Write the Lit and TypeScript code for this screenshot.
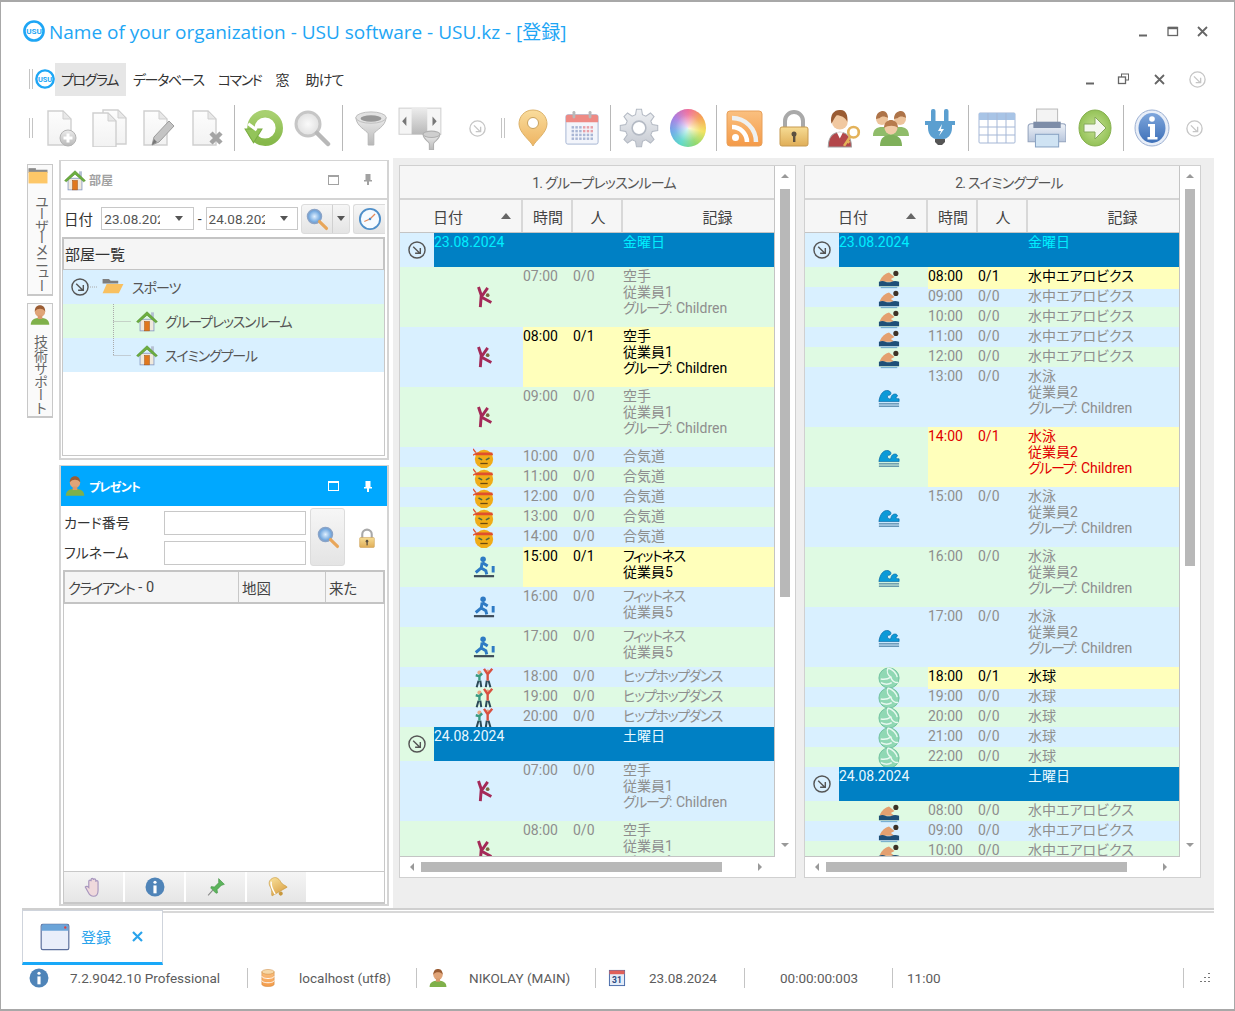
import { LitElement, html, css, svg } from "lit";

const doc = (dx = 0, dy = 0) => svg`<g transform="translate(${dx} ${dy})"><path d="M7 2h15l8 8v26H7z" fill="url(#gDoc)" stroke="#cfcfcf" stroke-width="1.4"/><path d="M22 2v8h8z" fill="#e8e8e8" stroke="#cfcfcf"/></g>`;

const gearPts = (() => {
  const pts: string[] = [];
  const n = 8;
  for (let i = 0; i < n; i++) {
    const a = (i / n) * Math.PI * 2;
    const step = (Math.PI * 2) / n;
    const p = (r: number, t: number) => `${(19 + r * Math.cos(t)).toFixed(1)},${(19 + r * Math.sin(t)).toFixed(1)}`;
    pts.push(p(13, a - step * 0.33), p(18, a - step * 0.17), p(18, a + step * 0.17), p(13, a + step * 0.33));
  }
  return pts.join(" ");
})();

const calDots = (() => {
  const out: unknown[] = [];
  for (let r = 0; r < 4; r++)
    for (let c = 0; c < 6; c++)
      out.push(svg`<rect x=${8 + c * 4} y=${17 + r * 4} width="2.6" height="2.6" fill=${c > 2 && r < 2 ? "#e8a0a8" : "#a9b6d4"}/>`);
  return out;
})();

const I: Record<string, unknown> = {
  docPlus: svg`${doc(0, 0)}<circle cx="27" cy="29" r="8" fill="url(#gMetal)" stroke="#b4b4b4"/><path d="M27 24.500v9M22.500 29h9" stroke="#fff" stroke-width="3"/>`,
  docs: svg`${doc(7, -1)}${doc(-3, 2)}`,
  docPen: svg`${doc(-1, 0)}<path d="M31 12l5 5-15 16-7 3 2-8z" fill="#c4c4c4" stroke="#9c9c9c"/><path d="M14 36l2-6 3 3z" fill="#777"/>`,
  docX: svg`${doc(-1, 0)}<path d="M24 24l10 10M34 24L24 34" stroke="#a4a4a4" stroke-width="4.500"/>`,
  refresh: svg`<circle cx="21" cy="19" r="13.500" fill="none" stroke="url(#gRefresh)" stroke-width="7"/><path d="M2 20h16l-8 13z" fill="#93c45a" stroke="#7aad42"/><path d="M5 15l8 6" stroke="#fff" stroke-width="3"/>`,
  mag: svg`<circle cx="15" cy="15" r="12" fill="url(#gGlass)" stroke="#c6c6c6" stroke-width="3"/><path d="M24 24l11 11" stroke="#b8b8b8" stroke-width="4.500" stroke-linecap="round"/>`,
  funnel: svg`<path d="M3 8c1 10 11 13 13 17v12h6V25c2-4 12-7 13-17z" fill="url(#gMetal)" stroke="#b5b5b5"/><ellipse cx="19" cy="8" rx="16" ry="6" fill="#e2e2e2" stroke="#bcbcbc"/><ellipse cx="19" cy="9" rx="11" ry="3.500" fill="#989898"/>`,
  colFunnel: svg`<rect x="1" y="2" width="40" height="25" fill="#f5f5f5" stroke="#d0d0d0"/><rect x="13" y="2" width="15" height="25" fill="url(#gMetal)"/><path d="M8 10v9l-4-4.500zM33 10v9l4-4.500z" fill="#777"/><path d="M24 27c0 5 5 6 6 9v6h4v-6c1-3 6-4 6-9z" fill="url(#gMetal)" stroke="#b0b0b0"/><ellipse cx="32" cy="27" rx="8" ry="3" fill="#cfcfcf" stroke="#b0b0b0"/>`,
  pin: svg`<path d="M19 1C10 1 5 8 5 15c0 9 12 17 14 22 2-5 14-13 14-22 0-7-5-14-14-14z" fill="url(#gPin)" stroke="#dcb26a"/><circle cx="19" cy="14" r="5.500" fill="#fff" stroke="#c9a25c"/>`,
  cal: svg`<rect x="2" y="5" width="34" height="31" rx="2" fill="#f3f5fb" stroke="#a3b3d2"/><path d="M2 7a2 2 0 0 1 2-2h30a2 2 0 0 1 2 2v6H2z" fill="#ee8a84"/><rect x="9" y="1" width="3" height="8" rx="1.500" fill="#b9b9b9"/><rect x="26" y="1" width="3" height="8" rx="1.500" fill="#b9b9b9"/>${calDots}`,
  gear: svg`<polygon points=${gearPts} fill="url(#gSilver)" stroke="#b4bac4"/><circle cx="19" cy="19" r="6.500" fill="#fff" stroke="#b4bac4" stroke-width="1.500"/>`,
  rss: svg`<rect x="1" y="2" width="35" height="35" rx="3" fill="url(#gOrange)" stroke="#e8a05a"/><circle cx="9.500" cy="28.500" r="3.500" fill="#fff"/><path d="M6 18a15 15 0 0 1 15 15" fill="none" stroke="#fff" stroke-width="4.500"/><path d="M6 9a24 24 0 0 1 24 24" fill="none" stroke="#eef0f0" stroke-width="4.500"/>`,
  lock: svg`<path d="M10 19v-7a9 9 0 0 1 18 0v7" fill="none" stroke="#a9a9a9" stroke-width="4"/><rect x="5" y="18" width="28" height="19" rx="2" fill="url(#gGold)" stroke="#c79a50"/><circle cx="19" cy="25" r="2.500" fill="#5c5040"/><rect x="18" y="25" width="2.400" height="8" fill="#5c5040"/>`,
  userKey: svg`<path d="M5 37c0-10 5-14 11-14s11 4 11 14z" fill="#b3474a" stroke="#a0a0a0"/><path d="M13 23l3 6 3-6z" fill="#fff"/><circle cx="16" cy="13" r="7.500" fill="#f1c8a0"/><path d="M8 15c-2-10 4-14 9-13 5 0 7 6 6 11-2-4-6-6-10-6-2 2-3 5-5 8z" fill="#9a5c33"/><circle cx="29" cy="23" r="5" fill="none" stroke="#e3b25a" stroke-width="2.500"/><path d="M26 27l-6 9M23 31l2 2" stroke="#e3b25a" stroke-width="2.500"/>`,
  users: svg`<path d="M1 27c0-7 4-9 9-9s9 2 9 9zM19 27c0-7 4-9 9-9s9 2 9 9z" fill="#90bc6a"/><circle cx="10" cy="10" r="6" fill="#edc49c"/><circle cx="28" cy="10" r="6" fill="#edc49c"/><path d="M4 10c0-6 4-8 7-8s5 3 5 7c-3-2-7-2-8 0zM22 10c0-6 4-8 7-8s5 3 5 7c-3-2-7-2-8 0z" fill="#ad7348"/><path d="M8 37c0-9 5-11 11-11s11 2 11 11z" fill="#7fb05a"/><circle cx="19" cy="19" r="6.500" fill="#f1cba6"/><path d="M12 19c0-6 4-8 7-8s7 2 7 8c-3-3-10-3-14 0z" fill="#b77b4d"/>`,
  plug: svg`<rect x="10" y="0" width="4.500" height="14" rx="2" fill="#5b9fd0"/><rect x="23" y="0" width="4.500" height="14" rx="2" fill="#5b9fd0"/><path d="M4 12h30v4h-3v3c0 7-5 11-8 11h-8c-3 0-8-4-8-11v-3H4z" fill="#5b9fd0"/><path d="M21 15l-4 7h3l-2 5 5-7h-3z" fill="#fff"/><path d="M14 30h10v3l-3 3h-4l-3-3z" fill="#555"/>`,
  grid: svg`<rect x="1" y="4" width="36" height="30" rx="1" fill="#fff" stroke="#a5b7d6"/><rect x="1" y="4" width="36" height="7" fill="#a8c4e6"/><path d="M1 18h36M1 26h36M10 4v30M19 4v30M28 4v30" stroke="#a5b7d6" fill="none"/>`,
  printer: svg`<rect x="10" y="1" width="20" height="16" fill="#f3f3f3" stroke="#bdbdbd"/><path d="M5 15h30a3 3 0 0 1 3 3v14H2V18a3 3 0 0 1 3-3z" fill="url(#gBlueGrey)" stroke="#94a3bd"/><rect x="7" y="13" width="26" height="6" fill="#7d8da8"/><rect x="9" y="25" width="22" height="12" fill="#cfe3f3" stroke="#8aa4c4"/>`,
  go: svg`<ellipse cx="19" cy="19" rx="16" ry="18" fill="url(#gGreen)" stroke="#86b04e"/><path d="M8 15h11V8l11 11-11 11v-7H8z" fill="#f4f7ee" stroke="#84a85a"/>`,
  info: svg`<ellipse cx="19" cy="19" rx="17" ry="18" fill="#e8eef8" stroke="#9db1d3"/><ellipse cx="19" cy="19" rx="13.500" ry="15" fill="url(#gInfo)"/><circle cx="19" cy="10" r="2.800" fill="#fff"/><path d="M15 15h7v13h2.500v2.500h-10V28H17V17.500h-2z" fill="#fff"/>`,
  circ: svg`<circle cx="19" cy="19" r="17" fill="none" stroke="currentColor" stroke-width="3"/><path d="M11 12l14 14M26 15v11H15" fill="none" stroke="currentColor" stroke-width="3"/>`,
  house: svg`<rect x="7" y="16" width="24" height="20" fill="#f0e9dc" stroke="#8a9cc4" stroke-width="1.500"/><rect x="26" y="4" width="5" height="10" fill="#b5bfd4"/><path d="M1 20L19 3l18 17-3 2L19 9 4 22z" fill="#6cae3e" stroke="#4e8a2a"/><rect x="15" y="20" width="8" height="16" fill="#e0781e" stroke="#a85412"/>`,
  folderOpen: svg`<path d="M1 5h11l3 3h13v5H1z" fill="#7e7e7e"/><path d="M1 30L8 14h29l-8 16z" fill="#f8c060"/>`,
  folderTab: svg`<rect x="1" y="6" width="14" height="4" fill="#8a8a8a"/><rect x="1" y="9" width="36" height="6" fill="#8a8a8a"/><rect x="1" y="13" width="36" height="22" fill="#fdc768"/>`,
  person: svg`<path d="M3 36c0-9 6-12 16-12s16 3 16 12z" fill="#7fb04a"/><circle cx="19" cy="13" r="9" fill="#e0a478"/><path d="M10 13c0-9 5-11 9-11s9 2 9 11c-2-4-6-5-9-5s-7 1-9 5z" fill="#9a5c33"/><rect x="15" y="20" width="8" height="6" fill="#d89a6c"/>`,
  bluemag: svg`<circle cx="15" cy="15" r="11" fill="url(#gBlueGlass)" stroke="#8aa4c8" stroke-width="2.500"/><path d="M23 23l11 11" stroke="#e8a65a" stroke-width="5" stroke-linecap="round"/>`,
  clock: svg`<circle cx="19" cy="19" r="16" fill="#f6fbff" stroke="#4f8fc9" stroke-width="3"/><path d="M19 19l8-8M19 19l-9 4" stroke="#e58a5a" stroke-width="2"/><circle cx="19" cy="19" r="2" fill="#4f8fc9"/>`,
  hand: svg`<path d="M10 19V9a2 2 0 0 1 4 0V6a2 2 0 0 1 4 0v1a2 2 0 0 1 4 0v3a2 2 0 0 1 4 0v15c0 6-3 10-8 10s-7-3-9-7l-5-9c2-2 4-1 6 1z" fill="#efd9dc" stroke="#a796be" stroke-width="2"/>`,
  infoFlat: svg`<circle cx="19" cy="19" r="18" fill="#4f84b8"/><circle cx="19" cy="10" r="3" fill="#fff"/><rect x="16" y="16" width="6" height="15" fill="#fff"/>`,
  pushpin: svg`<path d="M24 3l11 11-6 2-8 8 1 6-3 1-10-10 1-3 6 1 8-8z" fill="#5cb45c" stroke="#3c8c3c"/><path d="M13 25L4 35" stroke="#888" stroke-width="2"/>`,
  bell: svg`<g transform="rotate(-30 19 19)"><path d="M19 2c7 0 10 5 10 12 0 8 5 10 5 14H4c0-4 5-6 5-14C9 7 12 2 19 2z" fill="url(#gGold)" stroke="#c8983c"/><path d="M10 28c0-10 1-18 5-22" fill="none" stroke="#fff" stroke-width="2.500"/><circle cx="19" cy="32" r="3.500" fill="#c8983c"/></g>`,
  db: svg`<path d="M6 6v26c0 3 6 5 13 5s13-2 13-5V6z" fill="url(#gOrange)" stroke="#c88030"/><ellipse cx="19" cy="6" rx="13" ry="5" fill="#f6d8a8" stroke="#c88030"/><path d="M6 15c0 3 6 5 13 5s13-2 13-5M6 24c0 3 6 5 13 5s13-2 13-5" fill="none" stroke="#fff" stroke-width="2"/>`,
  windowIco: svg`<rect x="1.500" y="3" width="35" height="32" rx="2" fill="#e9eefa" stroke="#5c6f9c" stroke-width="1.500"/><path d="M2 5a2 2 0 0 1 2-2h30a2 2 0 0 1 2 2v6H2z" fill="#6ba4d8"/><circle cx="32" cy="7" r="1.500" fill="#e04040"/>`,
  calSmall: svg`<rect x="3" y="3" width="32" height="32" fill="#e3ecf8" stroke="#4468a8" stroke-width="2"/><rect x="3" y="3" width="32" height="8" fill="#e0605a"/><text x="19" y="30" text-anchor="middle" font-size="18" font-weight="700" fill="#2c4a80" font-family="Roboto">31</text>`,
};

const R: Record<string, unknown> = {
  karate: svg`<path d="M6 1l3 9-1 13M9 12l7-10M9 12l11 6" fill="none" stroke="#a42a58" stroke-width="3.200"/><circle cx="16" cy="10" r="2" fill="#7a6a40"/>`,
  aikido: svg`<circle cx="12" cy="13" r="10" fill="#f0ac18"/><path d="M3 6h18l1 3H2z" fill="#e0502c"/><path d="M3 6L0 2M3 7L0 9" stroke="#e0502c" stroke-width="1.400"/><path d="M6 12l4 2M18 12l-4 2" stroke="#4a6a40" stroke-width="1.600"/><path d="M8 18h8" stroke="#6c4a10" stroke-width="1.400"/>`,
  runner: svg`<circle cx="11" cy="3.500" r="3" fill="#2e7ac4"/><path d="M10 7l-1 6 5 3 1 4M9 13l-6 5M10 7l6 4M22 11v7" fill="none" stroke="#2e7ac4" stroke-width="3.200"/><path d="M1 22h22" stroke="#3c4a58" stroke-width="2.400"/>`,
  dancers: svg`<circle cx="7" cy="6" r="2.200" fill="#e8a882"/><path d="M7 9v6M3 9l4 1 3-3" fill="none" stroke="#3a9a80" stroke-width="2.600"/><path d="M6 15l-2 7M8 15l1 7" stroke="#2c4a58" stroke-width="2.200"/><circle cx="16" cy="5" r="2.200" fill="#e8a882"/><path d="M16 8v7M12 2l4 6 5-6" fill="none" stroke="#d85040" stroke-width="2.600"/><path d="M15 15l-1 7M17 15l2 7" stroke="#2c4a58" stroke-width="2.200"/>`,
  swim: svg`<circle cx="19.500" cy="7" r="2.800" fill="#3c3226"/><path d="M2 15c2-5 6-8 10-9l6 5-4 2 4 3H3z" fill="#e4a070"/><path d="M1 16c3-1 5-1 7 0s5 1 7 0 5-1 8 0v5H1z" fill="#1f4f78"/><path d="M3 22.500h18" stroke="#5ea0c8" stroke-width="1"/>`,
  wave: svg`<path d="M1 17c1-8 5-13 10-12 4 1 4 5 1 5s-2 5 2 4c0-4 3-6 6-5 2 1 1 3 0 3-1 1 0 2 3 2v3H1z" fill="#0c9ad8" stroke="#0b6ea8" stroke-width=".8"/><path d="M1 19.500h22M1 22h22" stroke="#1c5a88" stroke-width="1"/>`,
  ball: svg`<circle cx="12" cy="12" r="11" fill="#90d8b4" stroke="#6cc09c" stroke-width="1"/><path d="M11 1c-2 4 0 8 3 10-3 2-6 3-11 2M14 11c1 4 4 6 8 6M11 1c5 1 9 6 10 10M3 17c4 2 9 2 12 0" fill="none" stroke="#e8f8f0" stroke-width="1.600"/>`,
};

const ic = (name: string, w = 38, h = w, vb = "0 0 38 38") =>
  html`<svg class="i" width=${w} height=${h} viewBox=${vb} preserveAspectRatio="xMidYMid meet">${I[name]}</svg>`;
const ri = (name: string) => html`<svg class="ri" width="22" height="22" viewBox="0 0 24 24">${R[name]}</svg>`;
const logo = (s: number) =>
  html`<svg class="i" width=${s} height=${s} viewBox="0 0 38 38"><circle cx="19" cy="19" r="16.500" fill="#fff" stroke="#1ea6f5" stroke-width="4.500"/><text x="19" y="24" text-anchor="middle" font-size="14" font-weight="700" fill="#1ea6f5" font-family="Roboto">USU</text></svg>`;

type Row = { t?: string; p?: string; l?: string[]; i?: string; hl?: string; d?: string; w?: string; c?: boolean };
const mk = (i: string, l: string[], hours: string[], hl: Record<string, string> = {}): Row[] =>
  hours.map((t) => ({ t, p: hl[t] ? "0/1" : "0/0", l, i, hl: hl[t] }));

const K = ["空手", "従業員1", "グループ: Children"];
const A = ["合気道"];
const F = ["フィットネス", "従業員5"];
const H = ["ヒップホップダンス"];
const W = ["水中エアロビクス"];
const S = ["水泳", "従業員2", "グループ: Children"];
const B = ["水球"];

const fmt = (x: string) => {
  if (x.startsWith("グループ:")) return html`<span class="k">グループ</span>: Children`;
  if (x === "フィットネス" || x === "ヒップホップダンス") return html`<span class="k">${x}</span>`;
  return x;
};

const rows1: Row[] = [
  { d: "23.08.2024", w: "金曜日", c: true },
  ...mk("karate", K, ["07:00", "08:00", "09:00"], { "08:00": "y" }),
  ...mk("aikido", A, ["10:00", "11:00", "12:00", "13:00", "14:00"]),
  ...mk("runner", F, ["15:00", "16:00", "17:00"], { "15:00": "y" }),
  ...mk("dancers", H, ["18:00", "19:00", "20:00"]),
  { d: "24.08.2024", w: "土曜日" },
  ...mk("karate", K, ["07:00", "08:00"]),
];
const rows2: Row[] = [
  { d: "23.08.2024", w: "金曜日", c: true },
  ...mk("swim", W, ["08:00", "09:00", "10:00", "11:00", "12:00"], { "08:00": "y" }),
  ...mk("wave", S, ["13:00", "14:00", "15:00", "16:00", "17:00"], { "14:00": "r" }),
  ...mk("ball", B, ["18:00", "19:00", "20:00", "21:00", "22:00"], { "18:00": "y" }),
  { d: "24.08.2024", w: "土曜日" },
  ...mk("swim", W, ["08:00", "09:00", "10:00"]),
];

class AppRoot extends LitElement {
  static styles = css`
    :host {
      display: block;
      width: 1235px;
      height: 1011px;
      background: #fff;
      overflow: hidden;
      box-shadow: inset 0 2px 0 #a8a8a8, inset 1px 0 0 #a8a8a8, inset -1px 0 0 #a8a8a8, inset 0 -2px 0 #a8a8a8;
      font-family: Roboto, "Noto Sans CJK JP", sans-serif;
      font-size: 14px;
      color: #444;
      font-feature-settings: "palt";
      box-sizing: border-box;
    }
    * { box-sizing: border-box; }
    .k { letter-spacing: -1.4px; }
    .i, .ri { display: block; flex: none; }
    .defs { display: block; width: 0; height: 0; }
    .title { height: 62px; display: flex; align-items: center; padding: 0 0 0 23px; color: #1ea6f5; font-size: 19px; font-family: "Open Sans", "Noto Sans CJK JP", sans-serif; }
    .title .txt { margin-left: 4px; }
    .wbtns { margin-left: auto; display: flex; align-items: center; color: #666; }
    .title .wbtns { padding-right: 27px; gap: 18px; }
    .menu { height: 34px; margin-bottom: 8px; display: flex; align-items: center; padding-left: 29px; }
    .grip { width: 4px; height: 20px; border-left: 1px solid #c4c4c4; border-right: 1px solid #c4c4c4; flex: none; }
    .menu .grip { margin-right: 2px; }
    .m { height: 33px; display: flex; align-items: center; color: #333; flex: none; letter-spacing: -1.400px; }
    .m.on { background: #e6e6e6; width: 71px; padding-left: 6px; }
    .m.db { margin-left: 7px; }
    .m.cmd { margin-left: 14px; }
    .m.win { margin-left: 14px; letter-spacing: 0; }
    .m.help { margin-left: 16px; letter-spacing: -.7px; }
    .menu .wbtns { gap: 24px; padding-right: 29px; }
    .menu .wbtns > :first-child { margin-right: -3px; }
    .cc { color: #c6c6c6; }
    .toolbar { height: 48px; margin-bottom: 6px; display: flex; align-items: center; padding-left: 29px; }
    .toolbar .grip { margin-right: 2.5px; }
    .t { width: 48.6px; display: flex; justify-content: center; align-items: center; flex: none; }
    .sep { width: 1px; height: 46px; background: #b8b8b8; margin: 0 4px; flex: none; }
    .wheel { width: 36px; height: 38px; border-radius: 50%; background: radial-gradient(closest-side, #ffffffd0, #ffffff20 70%, transparent), conic-gradient(#ef6a9a, #f5a050, #f2e25a, #8ed86a, #5ad8c8, #6aa8e8, #a87ae0, #ef6a9a); }
    .ml2 { margin-left: 2px; }
    .ml5 { margin-left: 5.5px; }
    .ml23 { margin-left: 23px; }
    .ml15 { margin-left: 15px; }
    .ml1 { margin-left: 1.5px; }
    .ml9 { margin-left: 9.5px; }
    .main { height: 750px; display: flex; }
    .strip { width: 26px; margin: 6px 0 0 27px; display: flex; flex-direction: column; gap: 7px; flex: none; }
    .vtab { border: 1px solid #c8c8c8; border-width: 1px 1px 2px 1px; background: #fafafa; display: flex; flex-direction: column; align-items: center; color: #666; font-size: 14px; }
    .vtab span { writing-mode: vertical-rl; letter-spacing: -1.800px; white-space: nowrap; }
    .vtab.a { height: 132px; align-items: flex-start; }
    .vtab.a span { margin: 10px 0 0 3px; letter-spacing: -2px; }
    .vtab.b { height: 115px; }
    .vtab.b span { margin-top: 9px; letter-spacing: -.8px; }
    .dock { width: 330px; margin: 2px 0 0 6px; display: flex; flex-direction: column; gap: 5px; flex: none; }
    .box { border: 2px solid #d4d4d4; border-width: 1px 2px 2px 2px; background: #fff; display: flex; flex-direction: column; padding: 0 2px 0 1px; }
    .box.one { height: 300px; }
    .box.two { height: 441px; }
    .hd { height: 39px; margin: 0 -2px 0 -1px; display: flex; align-items: center; padding: 0 15px 0 3px; gap: 3px; font-size: 12px; font-weight: 700; border-bottom: 2px solid #d4d4d4; color: #a2a2a2; flex: none; }
    .hd.act { background: #00a8ff; color: #fff; border-bottom: none; height: 40px; }
    .hd .r { margin-left: auto; display: flex; gap: 25px; align-items: center; }
    .hd .k { letter-spacing: -.8px; }
    .maxi { width: 11px; height: 10px; border: 1px solid currentColor; border-top-width: 2px; }
    .pini { width: 8px; height: 11px; }
    .daterow { height: 37px; display: flex; align-items: center; font-size: 14.500px; color: #333; flex: none; }
    .dlabel { width: 40px; padding-left: 2px; }
    .dd { width: 94px; height: 23px; border: 1px solid #c8c8c8; display: flex; align-items: center; padding-left: 2px; font-size: 13.500px; color: #555; }
    .dd .v { width: 56px; overflow: hidden; white-space: nowrap; }
    .arr { width: 0; height: 0; border: 4px solid transparent; border-top: 5px solid #555; border-bottom: none; margin-left: 15px; }
    .dash { width: 12px; text-align: center; font-size: 14px; }
    .sbtn { height: 30px; margin-left: 3px; display: flex; border: 1px solid #dcdcdc; border-radius: 3px; background: linear-gradient(#f6f6f6, #e4e4e4); align-items: center; flex: none; }
    .sbtn .a1 { width: 31px; height: 28px; display: flex; justify-content: center; align-items: center; border-right: 1px solid #d0d0d0; }
    .sbtn .a2 { width: 16px; display: flex; justify-content: center; }
    .sbtn .a2 .arr { margin: 0; }
    .cbtn { width: 32px; height: 30px; margin-left: 3px; border: 1px solid #dcdcdc; border-right: none; border-radius: 3px 0 0 3px; background: linear-gradient(#f6f6f6, #e4e4e4); display: flex; justify-content: center; align-items: center; flex: none; }
    .glist { flex: 1; margin-bottom: 2px; border: 1px solid #c8c8c8; }
    .ghead { height: 34px; background: #f5f5f5; border: 2px solid #c4c4c4; margin: -1px; display: flex; align-items: center; padding: 0 0 2px 1px; font-size: 15px; color: #333; }
    .tr { height: 34px; display: flex; align-items: center; color: #555; }
    .tr.bl { background: #d9f0ff; }
    .tr.gn { background: #dffae3; }
    .tr .conn { display: block; flex: none; margin-left: 50px; }
    .tr .h { margin-left: 5px; }
    .tr .lb { margin-left: 7px; letter-spacing: -1.200px; }
    .tr .exp { margin-left: 8px; color: #555; }
    .tr .dots { margin-left: 1px; }
    .tr .fold { margin-left: 4px; }
    .tr .spt { margin-left: 8px; letter-spacing: -1px; }
    .form { height: 64px; display: grid; grid-template-columns: 100px 142px 4px 35px 12px 19px; grid-template-rows: 24px 24px; row-gap: 6px; padding: 5px 0 0 2px; align-items: center; flex: none; color: #333; font-size: 14px; }
    .inp { height: 24px; border: 1px solid #c8c8c8; background: #fff; grid-column: 2; }
    .lab { grid-column: 1; white-space: nowrap; margin-top: -2px; }
    .fbtn { grid-column: 4; grid-row: 1 / 3; height: 58px; margin-top: -3px; border: 1px solid #dcdcdc; border-radius: 3px; background: linear-gradient(#f6f6f6, #e4e4e4); display: flex; justify-content: center; align-items: center; }
    .flock { grid-column: 6; grid-row: 1 / 3; }
    .clist { flex: 1; border: 1px solid #c8c8c8; display: flex; flex-direction: column; margin-left: 1px; }
    .chead { height: 34px; margin: -1px; border: 2px solid #c4c4c4; background: #f5f5f5; display: grid; grid-template-columns: 174px 87px 1fr; color: #444; font-size: 14.500px; flex: none; }
    .chead > div { display: flex; align-items: center; padding-left: 3px; border-right: 1px solid #c8c8c8; }
    .chead > div:last-child { border-right: none; }
    .chead .kk { letter-spacing: -1.500px; margin-right: 4px; }
    .cbody { flex: 1; }
    .cfoot { height: 33px; margin: 0 -1px -1px; display: flex; border: 2px solid #c8c8c8; border-width: 1px 1px 2px 1px; flex: none; }
    .cfoot > div { width: 61px; background: linear-gradient(#f5f5f5, #e6e6e6); border-right: 2px solid #fff; display: flex; justify-content: center; align-items: center; }
    .docs { flex: 1; margin-left: 4px; margin-right: 21px; background: #eee; display: flex; gap: 8px; padding: 7px 13px 30px 6px; }
    .pane { width: 397px; border: 1px solid #d0d0d0; background: #fff; display: flex; flex-direction: column; }
    .pmain { display: flex; flex: 1; min-height: 0; }
    .tbl { width: 375px; flex: none; border-right: 1px solid #c4c4c4; border-bottom: 1px solid #c4c4c4; display: flex; flex-direction: column; overflow: hidden; }
    .ttl { height: 34px; background: #f6f6f6; border-bottom: 2px solid #d4d4d4; display: flex; justify-content: center; align-items: center; color: #555; flex: none; padding-left: 34px; letter-spacing: -.8px; }
    .cols { height: 33px; display: grid; grid-template-columns: 123px 50px 50px 1fr; background: #f6f6f6; border-bottom: 1px solid #c4c4c4; color: #444; font-size: 15px; flex: none; }
    .cols > div { display: flex; align-items: center; justify-content: center; border-right: 2px solid #d8d8d8; padding-left: 2px; }
    .cols > div:last-child { border-right: none; padding-left: 38px; }
    .cols .date { padding-left: 33px; justify-content: flex-start; }
    .sort { width: 0; height: 0; border: 5px solid transparent; border-bottom: 6px solid #666; border-top: none; margin-left: 38px; }
    .rows { flex: 1; overflow: hidden; }
    .row { display: grid; grid-template-columns: 123px 50px 50px 1fr; line-height: 16px; color: #8e8e8e; }
    .row.bl { background: #d9f0ff; }
    .row.gn { background: #dffae3; }
    .row.h1 { height: 20px; }
    .row.h2 { height: 40px; }
    .row.h3 { height: 60px; }
    .row > div { padding-top: 1px; }
    .row .ico { padding: 0 0 0 73px; display: flex; align-items: center; }
    .row.y .hl, .row.r .hl { background: #ffffbb; }
    .row.y .hl { color: #000; }
    .row.r .hl { color: #e00000; }
    .row .txt { white-space: nowrap; }
    .grp { height: 34px; display: flex; line-height: 16px; }
    .grp.bl { background: #d9f0ff; }
    .grp.gn { background: #dffae3; }
    .grp .ex { width: 34px; color: #555; display: flex; justify-content: center; align-items: center; flex: none; }
    .grp .bar { flex: 1; background: #0080c4; color: #e8f8ff; display: flex; padding-top: 1px; }
    .grp .bar.c { color: #00eeff; }
    .grp .bar .d { width: 189px; }
    .vs { flex: 1; display: flex; flex-direction: column; align-items: center; padding-top: 8px; }
    .tup { width: 0; height: 0; border: 4px solid transparent; border-bottom: 4px solid #999; border-top: none; flex: none; }
    .tdn { width: 0; height: 0; border: 4px solid transparent; border-top: 4px solid #999; border-bottom: none; flex: none; margin-top: auto; margin-bottom: 10px; }
    .thumbv { width: 10px; margin-top: 11px; background: #b8b8b8; flex: none; }
    .hs { height: 20px; display: flex; align-items: center; padding: 0 10px; flex: none; }
    .tl { width: 0; height: 0; border: 4px solid transparent; border-right: 4px solid #999; border-left: none; flex: none; }
    .tr2 { width: 0; height: 0; border: 4px solid transparent; border-left: 4px solid #999; border-right: none; flex: none; margin-left: 36px; }
    .thumbh { width: 301px; height: 10px; margin-left: 7px; background: #b8b8b8; flex: none; }
    .line { height: 5px; margin: 0 21px 0 22px; border: 1px solid #d8d8d8; border-width: 2px 0 2px 0; border-top-color: #cfcfcf; background: #fff; }
    .tabs { height: 55px; margin-top: -3px; padding-left: 22px; }
    .tab { width: 141px; height: 55px; background: #fff; border: 1px solid #cfd4dc; border-bottom: 3px solid #18a8f8; display: flex; align-items: center; padding-left: 17px; color: #2aa4ec; font-size: 15px; }
    .tab .lbl { margin-left: 11px; }
    .tab .x { margin-left: 21px; width: 11px; height: 11px; }
    .status { height: 26px; display: flex; align-items: center; padding-left: 29px; color: #5c5c5c; font-size: 13.500px; }
    .status .s { width: 1px; height: 20px; background: #c4c4c4; flex: none; }
    .status .w { white-space: nowrap; flex: none; }
    .status .ico { flex: none; }
    .status .g { margin-left: 14px; }
  `;

  renderRows(rows: Row[]) {
    return rows.map((r, idx) => {
      const band = idx % 2 === 0 ? "bl" : "gn";
      if (r.d)
        return html`<div class="grp ${band}"><div class="ex">${ic("circ", 18)}</div><div class="bar ${r.c ? "c" : ""}"><div class="d">${r.d}</div><div>${r.w}</div></div></div>`;
      const n = r.l!.length;
      return html`<div class="row ${band} h${n} ${r.hl ?? ""}">
        <div class="ico">${ri(r.i!)}</div>
        <div class="hl">${r.t}</div>
        <div class="hl">${r.p}</div>
        <div class="hl txt">${r.l!.map((x) => html`${fmt(x)}<br />`)}</div>
      </div>`;
    });
  }

  pane(title: string, rows: Row[], vh: number) {
    return html`<div class="pane">
      <div class="pmain">
        <div class="tbl">
          <div class="ttl">${title}</div>
          <div class="cols"><div class="date">日付<span class="sort"></span></div><div>時間</div><div>人</div><div>記録</div></div>
          <div class="rows">${this.renderRows(rows)}</div>
        </div>
        <div class="vs"><div class="tup"></div><div class="thumbv" style="height:${vh}px"></div><div class="tdn"></div></div>
      </div>
      <div class="hs"><div class="tl"></div><div class="thumbh"></div><div class="tr2"></div></div>
    </div>`;
  }

  winBtns(restore: boolean) {
    return html`
      <svg class="i" width="11" height="11" viewBox="0 0 11 11"><path d="M1 9.500h8" stroke="#666" stroke-width="2"/></svg>
      ${restore
        ? html`<svg class="i" width="13" height="12" viewBox="0 0 13 12"><rect x="4.500" y="1" width="7" height="6" fill="none" stroke="#666"/><rect x="1.500" y="4" width="7" height="6.500" fill="#fff" stroke="#666" stroke-width="1.300"/></svg>`
        : html`<svg class="i" width="12" height="11" viewBox="0 0 12 11"><rect x="1" y="1.500" width="9.500" height="8" fill="none" stroke="#666" stroke-width="1.300"/><path d="M1 2h9.500" stroke="#666" stroke-width="2.400"/></svg>`}
      <svg class="i" width="11" height="11" viewBox="0 0 11 11"><path d="M1 1l9 9M10 1l-9 9" stroke="#666" stroke-width="1.800"/></svg>
    `;
  }

  conn(last: boolean) {
    return html`<svg class="conn" width="18" height="34" viewBox="0 0 18 34"><path d="M.5 0V${last ? 17 : 34}M.5 17.500H18" fill="none" stroke="#aaa" stroke-dasharray="1 1"/></svg>`;
  }

  pinIcon() {
    return html`<svg class="pini" viewBox="0 0 8 11"><path d="M1.500 0h5v6H8v1.500H5V11H3V7.500H0V6h1.500z" fill="currentColor"/></svg>`;
  }

  renderStatus() {
    const seg = (ml: number, width: number, text: string) =>
      html`<span class="w" style="margin-left:${ml}px;width:${width}px">${text}</span><div class="s"></div>`;
    const icon = (ml: number, name: string, size: number) =>
      html`<span class="ico" style="margin-left:${ml}px">${ic(name, size)}</span>`;
    return html`
      <div class="status">
        ${ic("infoFlat", 20)}
        ${seg(21, 177, "7.2.9042.10 Professional")}
        ${icon(11, "db", 18)}
        ${seg(22, 117, "localhost (utf8)")}
        ${icon(11, "person", 20)}
        ${seg(21, 126, "NIKOLAY (MAIN)")}
        ${icon(12, "calSmall", 18)}
        ${seg(23, 95, "23.08.2024")}
        ${seg(35, 112, "00:00:00:003")}
        ${seg(14, 276, "11:00")}
        <svg class="i g" width="14" height="14" viewBox="0 0 14 14"><path d="M11 2v1M11 6v1M7 6v1M11 10v1M7 10v1M3 10v1" stroke="#777" stroke-width="2"/></svg>
      </div>`;
  }

  render() {
    return html`
      <svg class="defs" width="0" height="0" aria-hidden="true">
        <defs>
          <linearGradient id="gDoc" x1="0" y1="0" x2="0" y2="1"><stop offset="0" stop-color="#fdfdfd"/><stop offset="1" stop-color="#f2f2f2"/></linearGradient>
          <linearGradient id="gMetal" x1="0" y1="0" x2="0" y2="1"><stop offset="0" stop-color="#ececec"/><stop offset="1" stop-color="#b8b8b8"/></linearGradient>
          <linearGradient id="gSilver" x1="0" y1="0" x2="0" y2="1"><stop offset="0" stop-color="#eef0f3"/><stop offset="1" stop-color="#c6cad2"/></linearGradient>
          <linearGradient id="gRefresh" x1="0" y1="0" x2="0" y2="1"><stop offset="0" stop-color="#a8d070"/><stop offset="1" stop-color="#86b84a"/></linearGradient>
          <radialGradient id="gGlass"><stop offset="0" stop-color="#fafafa"/><stop offset="1" stop-color="#e0e0e0"/></radialGradient>
          <radialGradient id="gBlueGlass"><stop offset="0" stop-color="#e0f0ff"/><stop offset="1" stop-color="#5a98d8"/></radialGradient>
          <linearGradient id="gPin" x1="0" y1="0" x2="0" y2="1"><stop offset="0" stop-color="#f9dc9c"/><stop offset="1" stop-color="#eeb462"/></linearGradient>
          <linearGradient id="gOrange" x1="0" y1="0" x2="0" y2="1"><stop offset="0" stop-color="#fac080"/><stop offset="1" stop-color="#f49a48"/></linearGradient>
          <linearGradient id="gGold" x1="0" y1="0" x2="0" y2="1"><stop offset="0" stop-color="#f6dc94"/><stop offset="1" stop-color="#e0ae58"/></linearGradient>
          <linearGradient id="gBlueGrey" x1="0" y1="0" x2="0" y2="1"><stop offset="0" stop-color="#eef2f8"/><stop offset="1" stop-color="#b8c6dc"/></linearGradient>
          <radialGradient id="gGreen"><stop offset="0" stop-color="#c4e090"/><stop offset="1" stop-color="#94c258"/></radialGradient>
          <linearGradient id="gInfo" x1="0" y1="0" x2="0" y2="1"><stop offset="0" stop-color="#7ea6dc"/><stop offset="1" stop-color="#3e70b8"/></linearGradient>
        </defs>
      </svg>
      <div class="title">${logo(22)}<span class="txt">Name of your organization - USU software - USU.kz - [登録]</span><div class="wbtns">${this.winBtns(false)}</div></div>
      <div class="menu">
        <div class="grip"></div>${logo(20)}
        <div class="m on">プログラム</div><div class="m db">データベース</div><div class="m cmd">コマンド</div><div class="m win">窓</div><div class="m help">助けて</div>
        <div class="wbtns">${this.winBtns(true)}<span class="cc">${ic("circ", 17)}</span></div>
      </div>
      <div class="toolbar">
        <div class="grip"></div>
        <div class="t">${ic("docPlus")}</div><div class="t">${ic("docs")}</div><div class="t">${ic("docPen")}</div><div class="t">${ic("docX")}</div>
        <div class="sep"></div>
        <div class="t">${ic("refresh", 40)}</div><div class="t">${ic("mag")}</div>
        <div class="sep ml5"></div>
        <div class="t">${ic("funnel", 36)}</div><div class="t ml2">${ic("colFunnel", 46, 44, "0 0 44 42")}</div>
        <span class="cc ml23">${ic("circ", 17)}</span>
        <div class="grip ml15"></div>
        <div class="t ml1">${ic("pin")}</div><div class="t">${ic("cal", 36)}</div>
        <div class="sep"></div>
        <div class="t">${ic("gear", 40)}</div><div class="t"><div class="wheel"></div></div>
        <div class="sep"></div>
        <div class="t">${ic("rss", 38)}</div><div class="t">${ic("lock")}</div><div class="t">${ic("userKey", 40)}</div><div class="t">${ic("users", 38)}</div><div class="t">${ic("plug", 38)}</div>
        <div class="sep"></div>
        <div class="t">${ic("grid", 38)}</div><div class="t">${ic("printer", 40)}</div><div class="t">${ic("go", 38)}</div>
        <div class="sep"></div>
        <div class="t">${ic("info", 38)}</div>
        <span class="cc ml9">${ic("circ", 17)}</span>
      </div>
      <div class="main">
        <div class="strip">
          <div class="vtab a">${ic("folderTab", 20)}<span>ユーザーメニュー</span></div>
          <div class="vtab b">${ic("person", 22)}<span>技術サポート</span></div>
        </div>
        <div class="dock">
          <div class="box one">
            <div class="hd">${ic("house", 22)}<span>部屋</span><div class="r"><div class="maxi"></div>${this.pinIcon()}</div></div>
            <div class="daterow">
              <div class="dlabel">日付</div>
              <div class="dd"><span class="v">23.08.2024</span><span class="arr"></span></div>
              <div class="dash">-</div>
              <div class="dd"><span class="v">24.08.2024</span><span class="arr"></span></div>
              <div class="sbtn"><div class="a1">${ic("bluemag", 24)}</div><div class="a2"><span class="arr"></span></div></div>
              <div class="cbtn">${ic("clock", 24)}</div>
            </div>
            <div class="glist">
              <div class="ghead">部屋一覧</div>
              <div class="tr bl">
                <span class="exp">${ic("circ", 18)}</span>
                <svg class="i dots" width="8" height="2"><path d="M0 1h8" stroke="#aaa" stroke-dasharray="1 1"/></svg>
                <span class="fold">${ic("folderOpen", 22)}</span>
                <span class="spt">スポーツ</span>
              </div>
              <div class="tr gn">${this.conn(false)}<span class="h">${ic("house", 22)}</span><span class="lb">グループレッスンルーム</span></div>
              <div class="tr bl">${this.conn(true)}<span class="h">${ic("house", 22)}</span><span class="lb">スイミングプール</span></div>
            </div>
          </div>
          <div class="box two">
            <div class="hd act">${ic("person", 22)}<span class="k">プレゼント</span><div class="r"><div class="maxi"></div>${this.pinIcon()}</div></div>
            <div class="form">
              <div class="lab">カード番号</div><div class="inp"></div>
              <div class="lab">フルネーム</div><div class="inp"></div>
              <div class="fbtn">${ic("bluemag", 24)}</div>
              <div class="flock">${ic("lock", 20)}</div>
            </div>
            <div class="clist">
              <div class="chead"><div><span class="kk">クライアント</span>- 0</div><div>地図</div><div>来た</div></div>
              <div class="cbody"></div>
              <div class="cfoot">
                <div>${ic("hand", 22)}</div><div>${ic("infoFlat", 20)}</div><div>${ic("pushpin", 20)}</div><div>${ic("bell", 22)}</div>
              </div>
            </div>
          </div>
        </div>
        <div class="docs">
          ${this.pane("1. グループレッスンルーム", rows1, 408)}
          ${this.pane("2. スイミングプール", rows2, 377)}
        </div>
      </div>
      <div class="line"></div>
      <div class="tabs">
        <div class="tab">${ic("windowIco", 30)}<span class="lbl">登録</span>
          <svg class="x" viewBox="0 0 11 11"><path d="M1 1l9 9M10 1l-9 9" stroke="#2aa4ec" stroke-width="2.200"/></svg>
        </div>
      </div>
      ${this.renderStatus()}
    `;
  }
}
customElements.define("app-root", AppRoot);
